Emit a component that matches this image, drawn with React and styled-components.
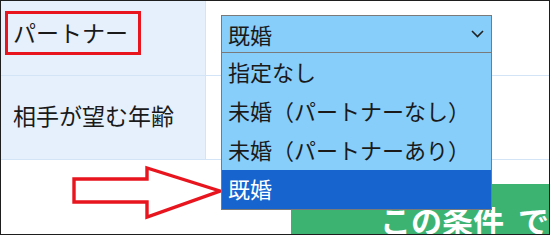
import styled, { createGlobalStyle } from 'styled-components';

const GlobalStyle = createGlobalStyle`
  html, body {
    margin: 0;
    padding: 0;
    background: #fff;
  }
  body {
    font-family: "Noto Sans CJK JP", "Noto Sans", sans-serif;
    color: #1a1a1a;
    text-spacing-trim: space-all;
  }
`

const Frame = styled.div`
  position: relative;
  width: 550px;
  height: 235px;
  box-sizing: border-box;
  border: 1px solid #1e1e1e;
  overflow: hidden;
  background: #fff;
`

const Table = styled.div`
  display: grid;
  grid-template-columns: 205px 1fr;
  grid-template-rows: 75px 84px;
`

const LabelCell = styled.div`
  box-sizing: border-box;
  background: #e6f0fc;
  border-right: 1px solid #d3e4f7;
  border-bottom: 1px solid #d3e4f7;
  display: flex;
  align-items: ${p => (p.$top ? 'flex-start' : 'center')};
  padding: ${p => (p.$top ? '10px 0 0 4px' : '0 0 4px 12px')};
  font-size: 23px;
  line-height: 1;
`

const ValueCell = styled.div`
  box-sizing: border-box;
  border-bottom: 1px solid #d3e4f7;
  padding: ${p => (p.$top ? '14px 0 0 15px' : '0')};
`

const Marked = styled.span`
  box-sizing: border-box;
  display: flex;
  align-items: center;
  height: 44px;
  padding: 0 10px 2px 5px;
  border: 3px solid #e8141e;
`

const SelectWrap = styled.div`
  position: relative;
  width: 271px;
  z-index: 2;
`

const Select = styled.div`
  box-sizing: border-box;
  height: 38px;
  display: flex;
  align-items: center;
  justify-content: space-between;
  padding: 0 7px 1px 6px;
  background: #87cefa;
  border: 1px solid #7a7a7a;
  font-size: 22px;
  line-height: 1;
`

const List = styled.ul`
  position: absolute;
  top: 100%;
  left: 0;
  width: 100%;
  box-sizing: border-box;
  margin: 0;
  padding: 0;
  list-style: none;
  background: #87cefa;
  border: 1px solid #7a7a7a;
  border-top: none;
`

const Option = styled.li`
  height: 39px;
  display: flex;
  align-items: center;
  padding: 0 6px 3px;
  box-sizing: border-box;
  font-size: 22px;
  line-height: 1;
  white-space: nowrap;
  background: ${p => (p.$active ? '#1764cf' : 'transparent')};
  color: ${p => (p.$active ? '#fff' : '#1a1a1a')};
`

const Bottom = styled.div`
  display: flex;
  padding: 24px 0 0 290px;
`

const SearchButton = styled.div`
  flex: 1;
  height: 60px;
  box-sizing: border-box;
  background: #3cb371;
  color: #fff;
  font-weight: 700;
  font-size: 31px;
  line-height: 1;
  padding: 20px 0 0 89px;
  white-space: nowrap;
  overflow: hidden;
  word-spacing: 7px;
`

const Arrow = styled.svg`
  position: absolute;
  left: 59px;
  top: 154px;
  z-index: 1;
`

const Chevron = () => (
  <svg width="13" height="8" viewBox="0 0 13 8">
    <polyline points="1,1 6.5,6.5 12,1" fill="none" stroke="#222" strokeWidth="1.6" />
  </svg>
)

const options = ['指定なし', '未婚（パートナーなし）', '未婚（パートナーあり）', '既婚']

const App = () => {
  return (
    <Frame>
      <GlobalStyle />
      <Table>
        <LabelCell $top>
          <Marked>パートナー</Marked>
        </LabelCell>
        <ValueCell $top>
          <SelectWrap>
            <Select>
              <span>既婚</span>
              <Chevron />
            </Select>
            <List>
              {options.map(o => (
                <Option key={o} $active={o === '既婚'}>{o}</Option>
              ))}
            </List>
          </SelectWrap>
        </ValueCell>
        <LabelCell>相手が望む年齢</LabelCell>
        <ValueCell />
      </Table>
      <Bottom>
        <SearchButton>この条件 で検索</SearchButton>
      </Bottom>
      <Arrow width="170" height="70" viewBox="0 0 170 70">
        <polygon
          points="14,24 87,24 87,13 160,36 87,62 87,47 14,47"
          fill="#fff"
          stroke="#e8141e"
          strokeWidth="3.4"
          strokeLinejoin="miter"
        />
      </Arrow>
    </Frame>
  );
}

export default App;
